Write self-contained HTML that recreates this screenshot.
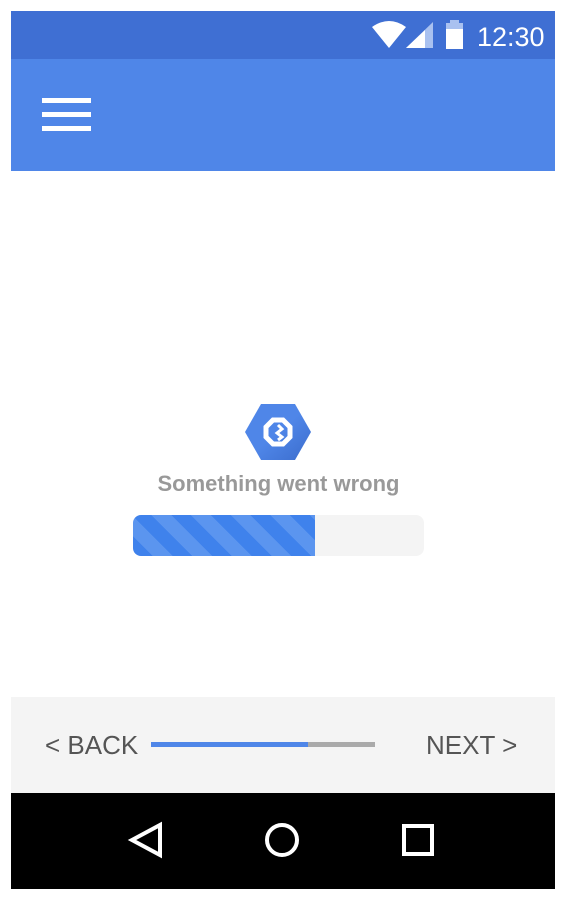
<!DOCTYPE html>
<html><head><style>
body{margin:0;width:568px;height:904px;background:#fff;position:relative;font-family:"Liberation Sans",sans-serif;overflow:hidden}
.a{position:absolute}
</style></head><body>
<div class="a" style="left:11px;top:11px;width:544px;height:48px;background:#3f6fd3"></div>
<div class="a" style="left:11px;top:59px;width:544px;height:112px;background:#4f86e8"></div>
<div class="a" style="left:42px;top:98px;width:49px;height:5px;background:#fff"></div>
<div class="a" style="left:42px;top:112px;width:49px;height:5px;background:#fff"></div>
<div class="a" style="left:42px;top:126px;width:49px;height:5px;background:#fff"></div>
<svg class="a" style="left:370px;top:18px" width="110" height="32">
<path d="M2 9 Q19 -3 36 9 L19 30 Z" fill="#fff"/>
<path d="M36 30 L63 4 L63 30 Z" fill="#a9c1f0"/>
<path d="M36 30 L55 12 L55 30 Z" fill="#fff"/>
<rect x="76" y="5" width="17" height="26" fill="#a9c1f0"/>
<rect x="80" y="2" width="9" height="4" fill="#a9c1f0"/>
<rect x="76" y="11" width="17" height="20" fill="#fff"/>
</svg>
<div class="a" style="left:477px;top:21px;color:#fff;font-size:27px;line-height:32px">12:30</div>
<svg class="a" style="left:244px;top:403px" width="68" height="58">
<defs><linearGradient id="g" x1="0" y1="0" x2="1" y2="1"><stop offset="0.5" stop-color="#4f86e8"/><stop offset="1" stop-color="#3b6ccc"/></linearGradient></defs>
<path d="M17 1 H51 L67 29 L51 57 H17 L1 29 Z" fill="url(#g)"/>
<path d="M29 17 H39 L46 24 V34 L39 41 H29 L22 34 V24 Z" fill="none" stroke="#fff" stroke-width="5"/>
<path d="M34 22 L38 26 L33 30 L38 34 L34 37" fill="none" stroke="#fff" stroke-width="3"/>
</svg>
<div class="a" style="left:0;width:557px;top:471px;text-align:center;color:#999;font-weight:bold;font-size:22px;line-height:26px">Something went wrong</div>
<div class="a" style="left:133px;top:515px;width:291px;height:41px;border-radius:8px;background:#f4f4f4;overflow:hidden">
<div style="width:182px;height:41px;background:repeating-linear-gradient(45deg,#3f82ec 0 14px,#5b95ef 14px 28px)"></div></div>
<div class="a" style="left:11px;top:697px;width:544px;height:96px;background:#f4f4f4"></div>
<div class="a" style="left:45px;top:730px;color:#555;font-size:26px;line-height:30px">&lt; BACK</div>
<div class="a" style="left:426px;top:730px;color:#555;font-size:26px;line-height:30px">NEXT &gt;</div>
<div class="a" style="left:151px;top:742px;width:224px;height:5px;background:#aaa"></div>
<div class="a" style="left:151px;top:742px;width:157px;height:5px;background:#4f86e8"></div>
<div class="a" style="left:11px;top:793px;width:544px;height:96px;background:#000"></div>
<svg class="a" style="left:120px;top:815px" width="320" height="50">
<path d="M12 25 L40 10 L40 40 Z" fill="none" stroke="#fff" stroke-width="4"/>
<circle cx="162" cy="25" r="15" fill="none" stroke="#fff" stroke-width="4"/>
<rect x="284" y="11" width="28" height="28" fill="none" stroke="#fff" stroke-width="4"/>
</svg>
</body></html>
